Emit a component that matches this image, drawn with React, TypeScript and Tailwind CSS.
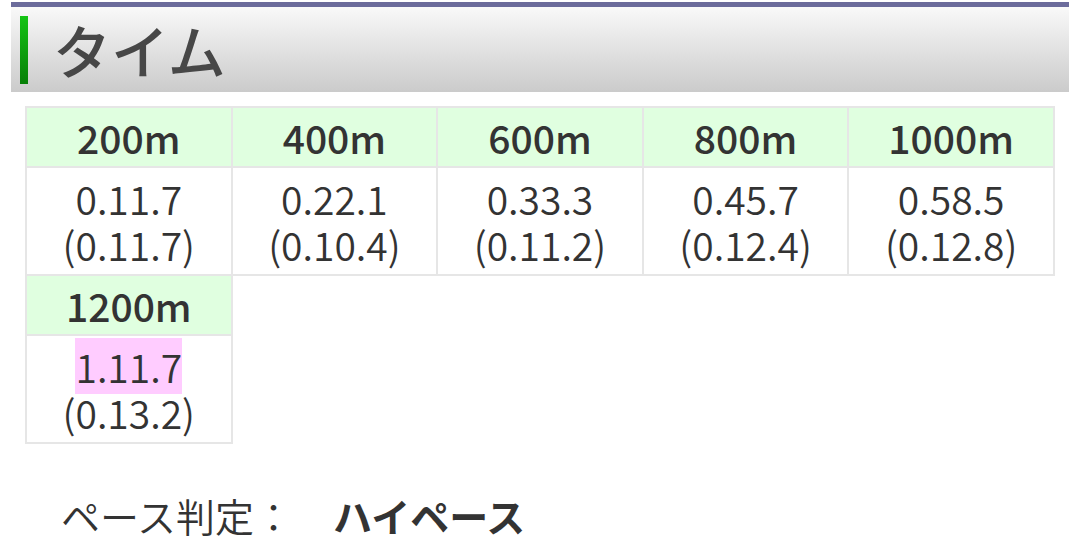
import React from 'react';

const laps = [
  { dist: '200m', time: '0.11.7', split: '(0.11.7)' },
  { dist: '400m', time: '0.22.1', split: '(0.10.4)' },
  { dist: '600m', time: '0.33.3', split: '(0.11.2)' },
  { dist: '800m', time: '0.45.7', split: '(0.12.4)' },
  { dist: '1000m', time: '0.58.5', split: '(0.12.8)' },
];

const th =
  'border-2 border-[#e6e6e6] bg-[#e0ffe0] h-[60px] py-0 text-center font-medium text-[39px] leading-[46px] text-[#333]';
const td =
  'border-2 border-[#e6e6e6] bg-white py-[7px] text-center align-top font-[350] text-[39px] leading-[46px] text-[#333]';

export default function App() {
  return (
    <div
      className="w-[1080px] h-[552px] overflow-hidden bg-white"
      style={{ fontFamily: '"Noto Sans CJK JP", "Noto Sans", sans-serif' }}
    >
      <div className="pt-[2px] px-[11px]">
        <div className="h-[90px] border-t-[5px] border-[#6b6b9b] bg-linear-to-b from-[#f9f9f9] to-[#cbcbcb] flex items-center pl-[9px]">
          <div className="w-[8px] h-[68px] bg-linear-to-b from-[#14c414] to-[#077f07]" />
          <h2 className="ml-[25px] -mt-[2px] text-[58px] leading-none text-[#474747] font-medium">
            タイム
          </h2>
        </div>

        <table className="mt-[14px] ml-[14px] w-[1030px] table-fixed border-collapse">
          <tbody>
            <tr>
              {laps.map((l) => (
                <th key={l.dist} className={th}>
                  {l.dist}
                </th>
              ))}
            </tr>
            <tr>
              {laps.map((l) => (
                <td key={l.dist} className={td}>
                  {l.time}
                  <br />
                  {l.split}
                </td>
              ))}
            </tr>
            <tr>
              <th className={th}>1200m</th>
            </tr>
            <tr>
              <td className={td}>
                <span className="bg-[#ffccff]">1.11.7</span>
                <br />
                (0.13.2)
              </td>
            </tr>
          </tbody>
        </table>

        <div className="mt-[48px] ml-[50px] flex text-[39px] leading-[46px] text-[#333]">
          <span className="font-[350]">ペース判定：</span>
          <span className="ml-[40px] font-bold">ハイペース</span>
        </div>
      </div>
    </div>
  );
}
